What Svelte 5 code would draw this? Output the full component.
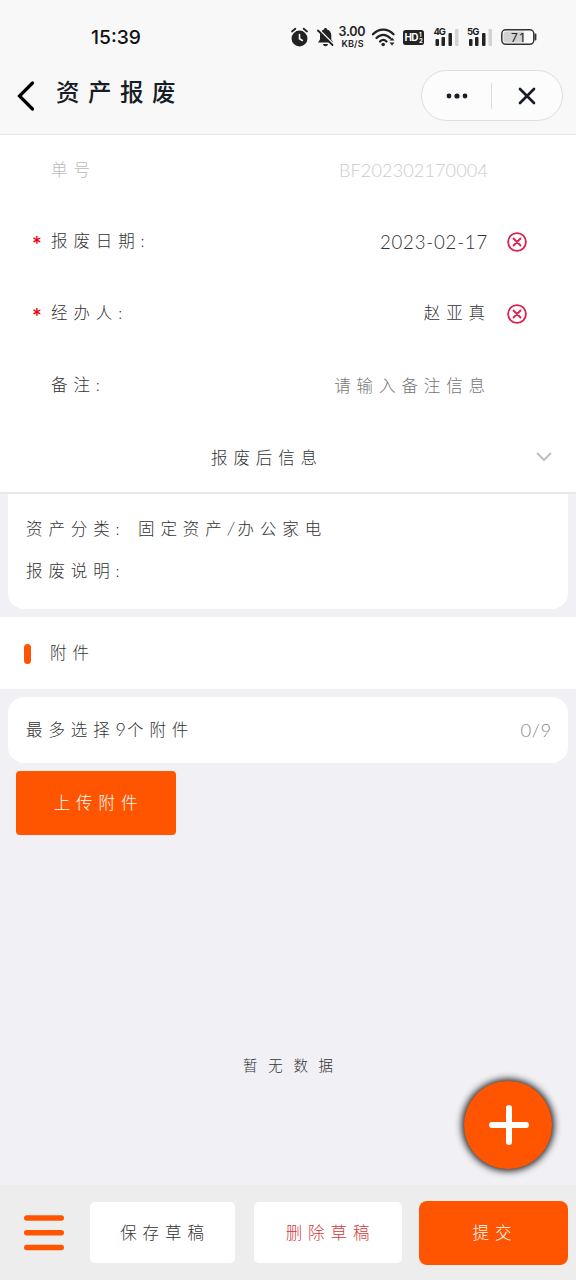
<script>
	const fields = [
		{ label: "单号", value: "BF202302170004", kind: "code", disabled: true },
		{ label: "报废日期:", value: "2023-02-17", kind: "date", required: true },
		{ label: "经办人:", value: "赵亚真", kind: "text", required: true },
		{ label: "备注:", placeholder: "请输入备注信息", kind: "text" },
	]
</script>

<div class="page">
	<header>
		<div class="status">
			<span class="clock">15:39</span>
			<svg class="status-icons" width="250" height="28" viewBox="0 0 250 28">
				<!-- alarm -->
				<g stroke="#222" fill="none" stroke-linecap="round">
					<circle cx="9.5" cy="15.5" r="7.2" fill="#222" stroke-width="1.5" />
					<path d="M2 8.500 5.300 5.700M17 8.500l-3.300-2.800" stroke-width="1.8" />
					<path d="M9.500 11.500v4.300l2.800 1.700" stroke="#f8f8f8" stroke-width="1.6" />
				</g>
				<!-- muted bell -->
				<path
					d="M35.500 5c1 0 1.500.6 1.500 1.500 3 .8 4.300 3 4.300 6v4l2 3H28l2-3v-4c0-3 1.500-5.200 4-6 0-.9.500-1.500 1.500-1.500zM33 21h5c-.3 3-4.700 3-5 0z"
					fill="#222"
				/>
				<path d="m29 7 14.500 14.500" stroke="#f8f8f8" stroke-width="2.400" />
				<path d="m28 7.500 14.500 14.500" stroke="#222" stroke-width="1.800" stroke-linecap="round" />
				<g class="speed">
					<text x="48.500" y="13" font-size="12.500" textLength="27">3.00</text>
					<text x="51.500" y="23.500" font-size="9" textLength="22">KB/S</text>
				</g>
				<!-- wifi -->
				<path
					d="M83 11.300c6-6.300 14.500-6.300 20.500 0M86.500 15c4-4.300 9.500-4.300 13.500 0M90 18.500c2-2 4.500-2 6.500 0"
					stroke="#222"
					stroke-width="2.300"
					stroke-linecap="round"
					fill="none"
				/>
				<circle cx="93.200" cy="21.500" r="1.800" fill="#222" />
				<path d="m99.500 17.500 2.500-3 2.500 3zM99.500 19.500l2.500 3 2.500-3z" fill="#222" />
				<!-- HD -->
				<rect x="113" y="7" width="21" height="15" rx="2.500" fill="#222" />
				<g fill="#fff" font-weight="700">
					<text x="114.500" y="18.200" font-size="10" textLength="14">HD</text>
					<text x="129" y="13.500" font-size="6">1</text>
					<text x="129" y="20.300" font-size="6">2</text>
				</g>
				<!-- mobile signals -->
				{#each ["4G", "5G"] as net, i}
					<g transform="translate({i * 33.5} 0)" fill="#222">
						<text x="143.500" y="11.500" font-size="9.500" font-weight="700" textLength="12.500">{net}</text>
						<rect x="145.500" y="16" width="3.500" height="7" rx="1" />
						<rect x="151.500" y="14" width="3.500" height="9" rx="1" />
						<rect x="158.500" y="10" width="3.500" height="13" rx="1" />
						<rect x="165" y="6" width="3.500" height="17" rx="1" fill="#d2d2d2" />
					</g>
				{/each}
				<!-- battery -->
				<rect x="211.800" y="6.800" width="32" height="14.500" rx="4" fill="#fafafa" stroke="#333" stroke-width="1.500" />
				<path d="M216 8.500h18v11h-18q-2.500 0-2.500-2.500v-6q0-2.500 2.500-2.500z" fill="#d2d2d2" />
				<path d="M245.500 11.500v5" stroke="#333" stroke-width="1.800" stroke-linecap="round" />
				<text x="221" y="18.500" font-size="12" font-weight="400" fill="#222" textLength="13.500">71</text>
			</svg>
		</div>
		<div class="nav">
			<svg class="back" width="20" height="32" viewBox="0 0 20 32">
				<path d="M16.500 3 3.500 16l13 13" />
			</svg>
			<h1>资产报废</h1>
			<div class="capsule">
				<svg width="22" height="6" viewBox="0 0 22 6">
					<circle cx="3" cy="3" r="2.400" />
					<circle cx="11" cy="3" r="2.600" />
					<circle cx="19" cy="3" r="2.400" />
				</svg>
				<i></i>
				<svg class="close" width="18" height="18" viewBox="0 0 18 18">
					<path d="m2 2 14 14M16 2 2 16" />
				</svg>
			</div>
		</div>
	</header>

	<section class="form">
		{#each fields as field}
			<div class="field" class:disabled={field.disabled}>
				<span class="star">{field.required ? "*" : ""}</span>
				<span class="label">{field.label}</span>
				<span class="value {field.kind}" class:placeholder={field.placeholder}>
					{field.value ?? field.placeholder}
				</span>
				<span class="clear">
					{#if field.required}
						<svg width="20" height="20" viewBox="0 0 20 20">
							<circle cx="10" cy="10" r="8.900" />
							<path d="m6.500 6.500 7 7M13.500 6.500l-7 7" />
						</svg>
					{/if}
				</span>
			</div>
		{/each}
		<div class="fold">
			<span>报废后信息</span>
			<svg width="18" height="12" viewBox="0 0 18 12">
				<path d="m2 2 7 7 7-7" />
			</svg>
		</div>
	</section>

	<section class="card detail">
		<p><span>资产分类:</span><span>固定资产<em>/</em>办公家电</span></p>
		<p><span>报废说明:</span></p>
	</section>

	<section class="heading"><i></i><span>附件</span></section>

	<section class="card limit">
		<span>最多选择<b>9</b>个附件</span>
		<span class="count">0/9</span>
	</section>
	<button class="upload">上传附件</button>

	<main>
		<p>暂无数据</p>
	</main>

	<footer>
		<svg class="menu" width="40" height="36" viewBox="0 0 40 36">
			<path d="M2.700 3h34.600M2.700 17.700h34.600M2.700 32.500h34.600" />
		</svg>
		<button>保存草稿</button>
		<button class="delete">删除草稿</button>
		<button class="submit">提交</button>
	</footer>

	<div class="fab">
		<svg width="40" height="40" viewBox="0 0 40 40">
			<path d="M20 3v34M3 20h34" />
		</svg>
	</div>
</div>

<style>
	:global(body) {
		background: #f0f0f5;
	}
	.page {
		position: relative;
		display: flex;
		flex-direction: column;
		width: 576px;
		height: 1280px;
		overflow: hidden;
		background: #f0f0f5;
		color: #333;
		font: 300 16.5px/24px Lato, "Noto Sans CJK SC", sans-serif;
		letter-spacing: 5.9px;
	}
	.page * {
		box-sizing: border-box;
	}
	p,
	h1 {
		margin: 0;
	}
	span,
	h1 {
		white-space: nowrap;
	}
	header {
		height: 135px;
		flex: none;
		background: #f8f8f8;
		border-bottom: 1px solid #e8e8e8;
	}
	.status {
		display: flex;
		justify-content: space-between;
		align-items: center;
		height: 70px;
		padding: 3px 36px 0 91px;
		letter-spacing: 0;
	}
	.clock {
		font: 500 19.3px/24px Inter, sans-serif;
		color: #111;
	}
	.status-icons {
		font-family: Inter, sans-serif;
		font-weight: 500;
	}
	.speed {
		font-weight: 600;
		fill: #222;
	}
	.nav {
		display: flex;
		align-items: center;
		height: 51px;
		padding: 0 13px 0 16px;
	}
	.back path {
		fill: none;
		stroke: #000;
		stroke-width: 3.2;
		stroke-linecap: round;
	}
	h1 {
		margin: -8px auto 0 20px;
		font-size: 23.5px;
		font-weight: 500;
		line-height: 32px;
		letter-spacing: 8.5px;
		color: #171d26;
	}
	.capsule {
		display: flex;
		align-items: center;
		width: 142px;
		height: 51px;
		padding-left: 24px;
		border: 1px solid #dedede;
		border-radius: 26px;
		background: #fcfcfc;
		fill: #171d26;
	}
	.capsule i {
		width: 1px;
		height: 26px;
		margin: 0 26px 0 23px;
		background: #dedede;
	}
	.close path {
		stroke: #171d26;
		stroke-width: 2.7;
		stroke-linecap: round;
	}
	.form {
		flex: none;
		background: #fff;
		border-bottom: 2px solid #e8e8e8;
	}
	.field {
		display: flex;
		align-items: center;
		height: 72px;
		padding: 0 49px 2px 32px;
	}
	.field:first-child {
		height: 71px;
	}
	.star {
		width: 19px;
		color: #e60012;
		font: 700 23px/16px Lato, sans-serif;
		padding-top: 5px;
	}
	.value {
		margin-left: auto;
	}
	.code {
		font-size: 18.1px;
		letter-spacing: 0.1px;
	}
	.date {
		padding-top: 2px;
		font-size: 18.6px;
		letter-spacing: 0.8px;
	}
	.text {
		margin-right: -3px;
	}
	.placeholder {
		padding-top: 2px;
		color: #757575;
	}
	.disabled {
		color: #bbb;
	}
	.disabled .value {
		color: #ccc;
	}
	.clear {
		display: flex;
		width: 20px;
		margin-left: 19px;
		padding-top: 2px;
	}
	.clear svg {
		fill: none;
		stroke: #dc1f4d;
		stroke-width: 1.8;
		stroke-linecap: round;
	}
	.fold {
		display: flex;
		align-items: center;
		height: 70px;
		padding: 0 23px 0 211px;
	}
	.fold span {
		padding-top: 1px;
	}
	.fold svg {
		margin-left: auto;
		fill: none;
		stroke: #bbb;
		stroke-width: 1.8;
	}
	.card {
		flex: none;
		margin: 0 8px;
		background: #fff;
		border-radius: 16px;
	}
	.detail {
		height: 115px;
		padding: 14px 18px;
		border-radius: 0 0 16px 16px;
	}
	.detail p {
		display: flex;
		height: 42px;
		line-height: 42px;
	}
	.detail p span:first-child {
		width: 112px;
	}
	em {
		font-size: 17px;
		letter-spacing: 3px;
	}
	.heading {
		display: flex;
		flex: none;
		align-items: center;
		gap: 19px;
		height: 72px;
		margin: 8px 0;
		padding-left: 24px;
		background: #fff;
	}
	.heading i {
		width: 7px;
		height: 20px;
		margin-top: 1px;
		border-radius: 4px;
		background: #ff5500;
	}
	.limit {
		display: flex;
		align-items: center;
		justify-content: space-between;
		height: 66px;
		padding: 0 16px 2px 18px;
	}
	b {
		font-weight: 300;
		font-size: 18px;
		letter-spacing: 1px;
	}
	.count {
		padding-top: 2px;
		font-size: 18.5px;
		letter-spacing: 0.7px;
		color: #888;
	}
	button {
		border: 0;
		padding: 0 0 0 5px;
		font: inherit;
		letter-spacing: inherit;
		color: inherit;
		background: #fff;
	}
	.upload {
		flex: none;
		width: 160px;
		height: 64px;
		margin: 8px 16px;
		border-radius: 4px;
		background: #ff5500;
		color: #fff;
	}
	main {
		display: flex;
		flex: 1;
		flex-direction: column;
		justify-content: flex-end;
		padding: 0 0 107px 243px;
		font-size: 14.5px;
		letter-spacing: 10.7px;
	}
	footer {
		display: flex;
		flex: none;
		align-items: center;
		height: 95px;
		padding: 0 8px 0 24px;
		background: #ededed;
	}
	.menu path {
		stroke: #ff5500;
		stroke-width: 5.4;
		stroke-linecap: round;
	}
	footer button {
		width: 145px;
		height: 61px;
		margin-left: 26px;
		border-radius: 5px;
	}
	footer .delete {
		width: 148px;
		margin-left: 19px;
		color: #d33838;
	}
	footer .submit {
		width: 149px;
		height: 64px;
		margin-left: 17px;
		padding-left: 3px;
		border-radius: 8px;
		background: #ff5500;
		color: #fff;
	}
	/* Floats over the content, just above the footer */
	.fab {
		position: absolute;
		right: 24px;
		bottom: 111px;
		display: flex;
		align-items: center;
		justify-content: center;
		width: 88px;
		height: 88px;
		padding-left: 2px;
		border-radius: 50%;
		background: #ff5500;
		box-shadow: 0 0 7px 2px #222;
	}
	.fab path {
		stroke: #fff;
		stroke-width: 6;
		stroke-linecap: round;
	}
</style>
